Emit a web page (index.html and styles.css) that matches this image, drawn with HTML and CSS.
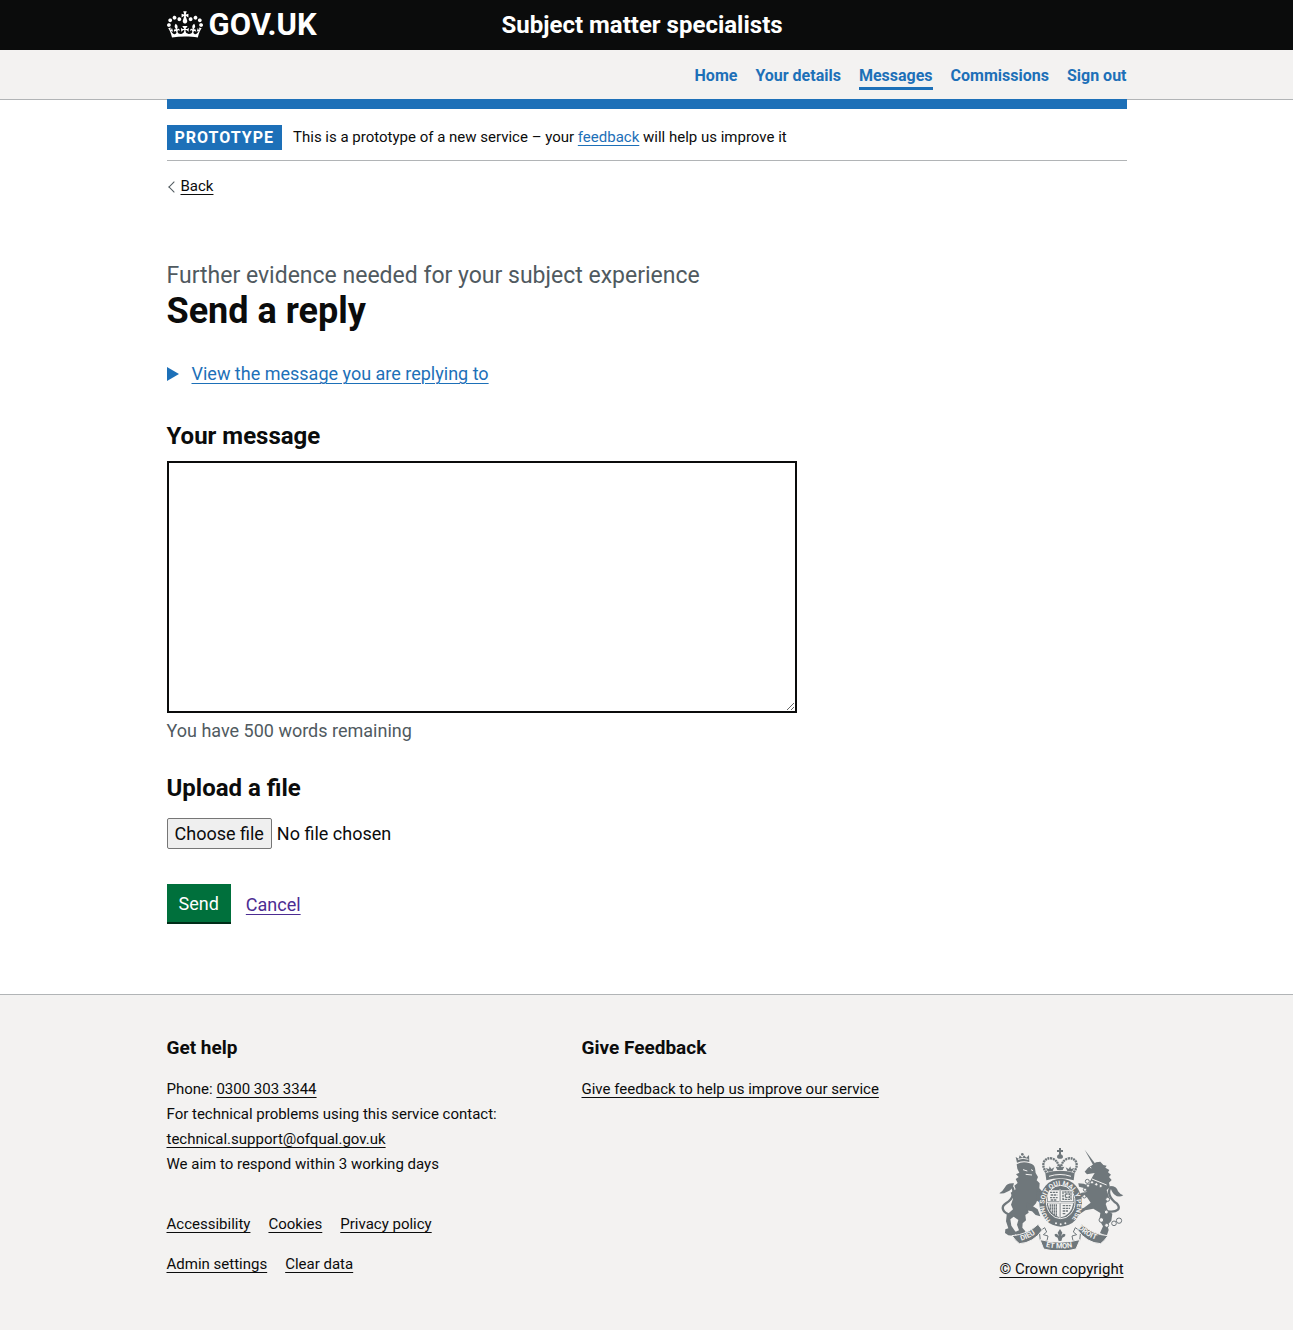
FILE: index.html
```html
<!DOCTYPE html>
<html lang="en">
<head>
<meta charset="utf-8">
<title>Send a reply</title>
<meta name="viewport" content="width=device-width, initial-scale=1">
<link rel="stylesheet" href="styles.css">
</head>
<body>
<header class="header">
  <div class="container header-inner">
    <a class="logo" href="#">
      <svg class="logo-crown" viewBox="0 0 132 97" aria-hidden="true"><path fill="currentColor" fill-rule="evenodd" d="M25 30.2c3.5 1.5 7.7-.2 9.1-3.7 1.5-3.6-.2-7.8-3.9-9.2-3.6-1.4-7.6.3-9.1 3.9-1.4 3.5.3 7.5 3.9 9zM9 39.5c3.6 1.5 7.8-.2 9.2-3.7 1.5-3.6-.2-7.8-3.9-9.1-3.6-1.5-7.6.2-9.1 3.8-1.4 3.5.3 7.5 3.8 9zM4.4 57.2c3.5 1.5 7.7-.2 9.1-3.8 1.5-3.6-.2-7.7-3.9-9.1-3.5-1.5-7.6.3-9.1 3.8-1.4 3.5.3 7.6 3.9 9.1zm38.3-21.4c3.5 1.5 7.7-.2 9.1-3.8 1.5-3.6-.2-7.7-3.9-9.1-3.6-1.5-7.6.3-9.1 3.8-1.3 3.6.4 7.7 3.9 9.1zm64.4-5.6c-3.6 1.5-7.8-.2-9.1-3.7-1.5-3.6.2-7.8 3.8-9.2 3.6-1.4 7.7.3 9.2 3.9 1.3 3.5-.4 7.5-3.9 9zm15.9 9.3c-3.6 1.5-7.7-.2-9.1-3.7-1.5-3.6.2-7.8 3.7-9.1 3.6-1.5 7.7.2 9.2 3.8 1.5 3.5-.3 7.5-3.8 9zm4.7 17.7c-3.6 1.5-7.8-.2-9.2-3.8-1.5-3.6.2-7.7 3.9-9.1 3.6-1.5 7.7.3 9.2 3.8 1.3 3.5-.4 7.6-3.9 9.1zM89.3 35.8c-3.6 1.5-7.8-.2-9.2-3.8-1.4-3.6.2-7.7 3.9-9.1 3.6-1.5 7.7.3 9.2 3.8 1.4 3.6-.3 7.7-3.9 9.1zM69.7 17.7l8.9 4.7V9.3l-8.9 2.8c-.2-.3-.5-.6-.9-.9L72.4 0H59.6l3.5 11.2c-.3.3-.6.5-.9.9l-8.8-2.8v13.1l8.8-4.7c.3.3.6.7.9.9l-5 15.4v.1c-.2.8-.4 1.6-.4 2.4 0 4.1 3.1 7.5 7 8.1h.2c.3 0 .7.1 1 .1.4 0 .7 0 1-.1h.2c4-.6 7.1-4.1 7.1-8.1 0-.8-.1-1.7-.4-2.4V34l-5.1-15.4c.4-.2.7-.6 1-.9zM66 92.8c16.9 0 32.8 1.1 47.1 3.2 4-16.9 8.9-26.7 14-33.5l-9.6-3.4c1 4.9 1.1 7.2 0 10.2-1.5-1.4-3-4.3-4.2-8.7L108.6 76c2.8-2 5-3.2 7.5-3.3-4.4 9.4-10 11.9-13.6 11.2-4.3-.8-6.3-4.6-5.6-7.9 1-4.7 5.7-5.9 8-.5 4.3-8.7-3-11.4-7.6-8.8 7.1-7.2 7.9-13.5 2.1-21.1-8 6.1-8.1 12.3-4.5 20.8-4.7-5.4-12.1-2.5-9.5 6.2 3.4-5.2 7.9-2 7.2 3.1-.6 4.3-6.4 7.8-13.5 7.2-10.3-.9-10.9-8-11.2-13.8 2.5-.5 7.1 1.8 11 7.3L80.2 60c-4.1 4.4-8 5.3-12.3 5.4 1.4-4.4 8-11.6 8-11.6H55.5s6.4 7.2 7.9 11.6c-4.2-.1-8-1-12.3-5.4l1.4 16.4c3.9-5.5 8.5-7.7 10.9-7.3-.3 5.8-.9 12.8-11.1 13.8-7.2.6-12.9-2.9-13.5-7.2-.7-5 3.8-8.3 7.1-3.1 2.7-8.7-4.6-11.6-9.4-6.2 3.7-8.5 3.6-14.7-4.6-20.8-5.8 7.6-5 13.9 2.2 21.1-4.7-2.6-11.9.1-7.7 8.8 2.3-5.5 7.1-4.2 8.1.5.7 3.3-1.3 7.1-5.7 7.9-3.5.7-9-1.8-13.5-11.2 2.5.1 4.7 1.3 7.5 3.3l-4.7-15.4c-1.2 4.4-2.7 7.2-4.3 8.7-1.1-3-.9-5.3 0-10.2l-9.5 3.4c5 6.9 9.9 16.7 14 33.5 14.8-2.1 30.8-3.2 47.7-3.2z"/></svg>
      <span>GOV.UK</span>
    </a>
    <a class="service" href="#">Subject matter specialists</a>
  </div>
</header>

<nav class="nav" aria-label="Main">
  <ul class="container nav-list">
    <li><a href="#">Home</a></li>
    <li><a href="#">Your details</a></li>
    <li><a href="#" aria-current="page">Messages</a></li>
    <li><a href="#">Commissions</a></li>
    <li><a href="#">Sign out</a></li>
  </ul>
</nav>

<div class="container">
  <div class="phase">
    <strong class="tag">PROTOTYPE</strong>
    <span>This is a prototype of a new service – your <a class="link" href="#">feedback</a> will help us improve it</span>
  </div>
  <a class="back" href="#">Back</a>

  <main class="main">
    <h1 class="title"><span class="caption">Further evidence needed for your subject experience</span>Send a reply</h1>

    <details class="details">
      <summary><span>View the message you are replying to</span></summary>
    </details>

    <form>
      <div class="field">
        <label class="label" for="message">Your message</label>
        <textarea id="message" class="message" aria-describedby="count"></textarea>
        <p id="count" class="hint">You have 500 words remaining</p>
      </div>
      <div class="field">
        <label class="label" for="upload">Upload a file</label>
        <div class="upload">
          <span class="upload-button" aria-hidden="true">Choose file</span>
          <span>No file chosen</span>
          <input id="upload" class="upload-input" type="file">
        </div>
      </div>
      <div class="actions">
        <button class="button" type="button">Send</button>
        <a class="cancel" href="#">Cancel</a>
      </div>
    </form>
  </main>
</div>

<footer class="footer">
  <div class="container footer-inner">
    <div class="footer-main">
      <div class="footer-columns">
        <section>
          <h2>Get help</h2>
          <p>Phone: <a href="#">0300 303 3344</a></p>
          <p>For technical problems using this service contact:</p>
          <p><a href="#">technical.support@ofqual.gov.uk</a></p>
          <p>We aim to respond within 3 working days</p>
        </section>
        <section>
          <h2>Give Feedback</h2>
          <p><a href="#">Give feedback to help us improve our service</a></p>
        </section>
      </div>
      <ul class="footer-links">
        <li><a href="#">Accessibility</a></li>
        <li><a href="#">Cookies</a></li>
        <li><a href="#">Privacy policy</a></li>
      </ul>
      <ul class="footer-links">
        <li><a href="#">Admin settings</a></li>
        <li><a href="#">Clear data</a></li>
      </ul>
    </div>
    <a class="copyright" href="#">
      <svg class="crest" viewBox="27 24 375 306" aria-hidden="true">
        <defs>
          <path id="motto" d="M182 240A49 58 0 1 1 242 240"/>
          <path id="dieu" d="M94 302Q130 292 156 262"/>
          <path id="mon" d="M167 320Q210 331 260 319"/>
          <path id="droit" d="M264 265Q288 291 328 302"/>
        </defs>
        <!-- lion -->
        <g class="ink">
          <path d="M81 68L77 51L86 56L89 46L97 53L102 46L109 53L117 45L118 66Q100 61 81 68Z"/>
          <circle cx="97" cy="43" r="4"/>
          <path d="M80 73Q98 63 119 70Q133 73 135 85L137 99L144 111L140 121L149 130L148 145L162 160L158 174L148 169L143 178L138 190Q128 204 113 207L116 218L106 225L108 241L98 250L97 263L106 274L104 286L78 285L73 277L87 271L81 254L85 240L71 230L61 238L64 257L77 276L75 288L55 286L45 279L46 268L55 265L48 244L50 225L69 208L63 194L69 176L62 158L77 148L73 137L83 129L77 117L86 111L78 103L88 98L82 86Z"/>
          <path d="M140 150L162 168L152 190L139 181Z"/>
          <path d="M110 187L143 208L151 229L137 225L126 214L109 211Z"/>
          <path class="line" d="M62 225C37 218 31 201 48 190C71 176 75 152 65 139"/>
          <path d="M28 160Q39 153 45 142Q51 128 72 130Q68 151 50 156Q40 162 28 160Z"/>
        </g>
        <path class="paper-line" d="M84 58Q99 52 115 58M99 89L112 93M123 89L129 92M107 103L126 105"/>
        <!-- unicorn -->
        <g class="ink">
          <path d="M284 29L318 74L311 78Z"/>
          <path d="M304 77L318 67L331 65L340 75L350 77L346 83L358 90L354 97L363 104L357 111L365 120L357 128L360 142L350 150L358 174L347 192L354 212L367 221L364 242L352 256L356 270L350 288L330 279L339 259L328 241L331 219L310 206L286 211L264 226L254 243L242 232L262 211L282 203L302 188L291 172L278 169L267 178L258 170L275 158L290 156L282 144L267 140L265 130L281 131L296 137L301 122L307 111L314 99L291 103L284 95L294 83Z"/>
          <path class="line" d="M354 214C382 218 394 206 381 191C358 175 351 155 363 140"/>
          <path d="M361 138Q380 138 384 154Q391 164 400 166Q386 174 374 164Q364 158 361 138Z"/>
        </g>
        <path class="paper-line" d="M300 82L304 84M306 117L350 135"/>
        <g class="ring"><circle cx="292" cy="124" r="6"/><circle cx="306" cy="127" r="5"/><circle cx="319" cy="133" r="5"/><circle cx="332" cy="138" r="5"/><circle cx="294" cy="137" r="5"/><circle cx="285" cy="149" r="5"/><circle cx="283" cy="169" r="5"/><circle cx="353" cy="178" r="6"/><circle cx="349" cy="216" r="6"/><circle cx="334" cy="240" r="7"/><circle cx="350" cy="256" r="6"/><circle cx="372" cy="250" r="7"/><circle cx="387" cy="242" r="8"/></g>
        <!-- royal crown -->
        <g class="ink">
          <path d="M207 24H213V30H219V36H213V43Q219 45 219 50Q219 56 210 56Q201 56 201 50Q201 45 207 43V36H201V30H207Z"/>
          <path d="M166 99Q210 85 254 99L251 121Q210 108 169 121Z"/>
          <path d="M174 95L167 84L177 87L179 79L184 87L193 82L188 93ZM202 90L197 80L206 82L210 72L214 82L223 80L218 90ZM246 95L253 84L243 87L241 79L236 87L227 82L232 93Z"/>
        </g>
        <path class="beads" d="M169 97C151 75 162 52 184 55Q203 59 207 82M251 97C269 75 258 52 236 55Q217 59 213 82"/>
        <path class="paper-line" d="M177 109Q210 98 243 109"/>
        <!-- garter and shield -->
        <ellipse class="ink" cx="212" cy="188" rx="64" ry="72"/>
        <ellipse class="paper-ring" cx="212" cy="186" rx="43" ry="50"/>
        <text class="motto"><textPath href="#motto">HONI SOIT QUI MAL Y PENSE</textPath></text>
        <path class="paper" d="M177 151H208V184H173Q172 167 177 151ZM213 151H246Q251 168 250 184H213ZM173 190H208V232Q179 224 173 190ZM213 190H250Q244 225 213 232Z"/>
        <path class="detail" d="M180 157H203M182 165H202M180 173H203M182 180H201M219 156V178H243V156ZM226 162H238V172H226ZM181 193V211M187 193V221M193 193V225M199 193V227M218 197H242M218 205H240M218 213H236M218 221H228"/>
        <path class="paper-line" d="M210 148V234M171 187H252"/>
        <circle class="paper" cx="198" cy="250" r="3"/><circle class="paper" cx="212" cy="253" r="3"/><circle class="paper" cx="226" cy="250" r="3"/>
        <!-- scroll -->
        <path class="ring" d="M148 275L164 263L170 276L160 284L174 288L171 302L151 301ZM272 275L256 263L250 276L260 284L246 288L249 302L269 301Z"/>
        <g class="scroll">
          <path d="M66 287Q112 284 144 253L157 270Q130 309 88 311Q76 302 66 287Z"/>
          <path d="M354 287Q308 284 276 253L263 270Q290 309 332 311Q344 302 354 287Z"/>
          <path d="M150 299Q210 314 270 299L258 327Q210 340 161 327Z"/>
        </g>
        <g class="scroll-text"><text><textPath href="#dieu">DIEU</textPath></text><text><textPath href="#mon">ET MON</textPath></text><text><textPath href="#droit">DROIT</textPath></text></g>
        <path class="fleur" d="M210 267L217 278L213 289Q219 277 226 283Q227 291 217 293L214 303H206L203 293Q193 291 194 283Q201 277 207 289L203 278Z"/>
      </svg>
      <span>© Crown copyright</span>
    </a>
  </div>
</footer>
</body>
</html>
```
FILE: styles.css
```css
*, *::before, *::after { box-sizing: border-box; }
html { background: #f3f2f1; }
body {
  margin: 0;
  background: #fff;
  color: #0b0c0c;
  font: 18px/25px Roboto, "Liberation Sans", sans-serif;
}
h1, h2, p, ul { margin: 0; padding: 0; }
ul { list-style: none; }
a { color: inherit; text-underline-offset: 3px; text-decoration-thickness: 1px; }
.container { max-width: 960px; margin: 0 auto; }

.header { background: #0b0c0c; color: #fff; }
.header-inner { display: grid; grid-template-columns: 1fr 2fr; align-items: center; height: 50px; }
.header a { text-decoration: none; }
.logo { display: flex; align-items: center; gap: 6px; font-size: 31px; line-height: 30px; font-weight: 700; }
.logo-crown { width: 36px; height: 27px; margin-bottom: 2px; }
.service { padding-left: 15px; font-size: 24px; line-height: 30px; font-weight: 700; }

.nav { background: #f3f2f1; border-bottom: 1px solid #b1b4b6; }
.nav-list { display: flex; justify-content: flex-end; gap: 18px; padding: 13px 0 9px; font-size: 16px; font-weight: 700; }
.nav-list a { display: block; height: 27px; color: #1d70b8; text-decoration: none; }
.nav-list [aria-current] { border-bottom: 3px solid #1d70b8; }

.phase {
  position: relative;
  display: flex;
  align-items: center;
  gap: 11px;
  margin-top: -1px;
  padding: 16px 0 10px;
  border-top: 10px solid #1d70b8;
  border-bottom: 1px solid #b1b4b6;
  font-size: 15px;
}
.tag { padding: 0 8px; background: #1d70b8; color: #fff; font-size: 16px; letter-spacing: 1px; }
.link { color: #1d70b8; }
.back { display: inline-flex; align-items: center; gap: 5px; margin-top: 13px; font-size: 15px; }
.back::before {
  content: "";
  width: 8px;
  height: 8px;
  margin-left: 3px;
  margin-right: -2px;
  border: solid #505a5f;
  border-width: 0 0 1px 1px;
  transform: rotate(45deg);
}

.main { padding: 62px 0 70px; }
.title { font-size: 36px; line-height: 40px; font-weight: 700; }
.caption { display: block; color: #505a5f; font-size: 23px; line-height: 30px; font-weight: 400; }
.details { margin: 30px 0 35px; color: #1d70b8; }
.details summary { display: flex; align-items: center; gap: 13px; cursor: pointer; }
.details summary::before {
  content: "";
  border: solid transparent;
  border-width: 7px 0 7px 12px;
  border-left-color: #1d70b8;
}
.details span { text-decoration: underline 1px; text-underline-offset: 3px; }

.field { margin-bottom: 30px; }
.label { display: block; margin-bottom: 10px; font-size: 24px; line-height: 30px; font-weight: 700; }
.message {
  display: block;
  width: 100%;
  max-width: 630px;
  height: 252px;
  padding: 5px;
  border: 2px solid #0b0c0c;
  border-radius: 0;
  font: inherit;
  resize: vertical;
}
.hint { margin-top: 5px; color: #505a5f; }
.upload { position: relative; display: flex; align-items: center; gap: 5px; width: max-content; margin: 15px 0 35px; }
.upload-button { padding: 2px 7px; border: 1px solid #767676; border-radius: 2px; background: #efefef; }
.upload-input { position: absolute; inset: 0; width: 100%; opacity: 0; }
.actions { display: flex; align-items: center; gap: 15px; }
.button {
  height: 38px;
  margin-bottom: 2px;
  padding: 0 12px;
  border: 0;
  background: #00703c;
  box-shadow: 0 2px 0 #002d18;
  color: #fff;
  font: inherit;
}
.cancel { color: #4c2c92; }

.footer { padding: 40px 0 48px; background: #f3f2f1; border-top: 1px solid #b1b4b6; font-size: 15px; }
.footer-inner { display: flex; align-items: flex-end; }
.footer-main { flex: 1; padding-bottom: 5px; }
.footer-columns { display: grid; grid-template-columns: 1fr 1fr; margin-bottom: 35px; }
.footer h2 { margin-bottom: 17px; font-size: 19px; line-height: 25px; }
.footer-links { display: flex; gap: 18px; }
.footer-links + .footer-links { margin-top: 15px; }
.copyright { display: flex; flex-direction: column; align-items: center; gap: 7px; min-width: 130px; }
.crest { width: 125px; height: 102px; }

.ink { fill: #6f777b; }
.paper { fill: #f3f2f1; }
.line { fill: none; stroke: #6f777b; stroke-width: 7; }
.paper-line { fill: none; stroke: #f3f2f1; stroke-width: 3; }
.paper-ring { fill: none; stroke: #f3f2f1; stroke-width: 3; }
.beads { fill: none; stroke: #6f777b; stroke-width: 7; stroke-dasharray: 6 2; }
.ring { fill: #f3f2f1; stroke: #6f777b; stroke-width: 3; }
.detail { fill: none; stroke: #6f777b; stroke-width: 4; stroke-dasharray: 7 2; }
.scroll { fill: #6f777b; stroke: #f3f2f1; stroke-width: 3; }
.fleur { fill: #6f777b; }
.motto { fill: #f3f2f1; font-size: 20px; font-weight: 700; }
.scroll-text { fill: #f3f2f1; font-size: 22px; font-weight: 700; }
```
